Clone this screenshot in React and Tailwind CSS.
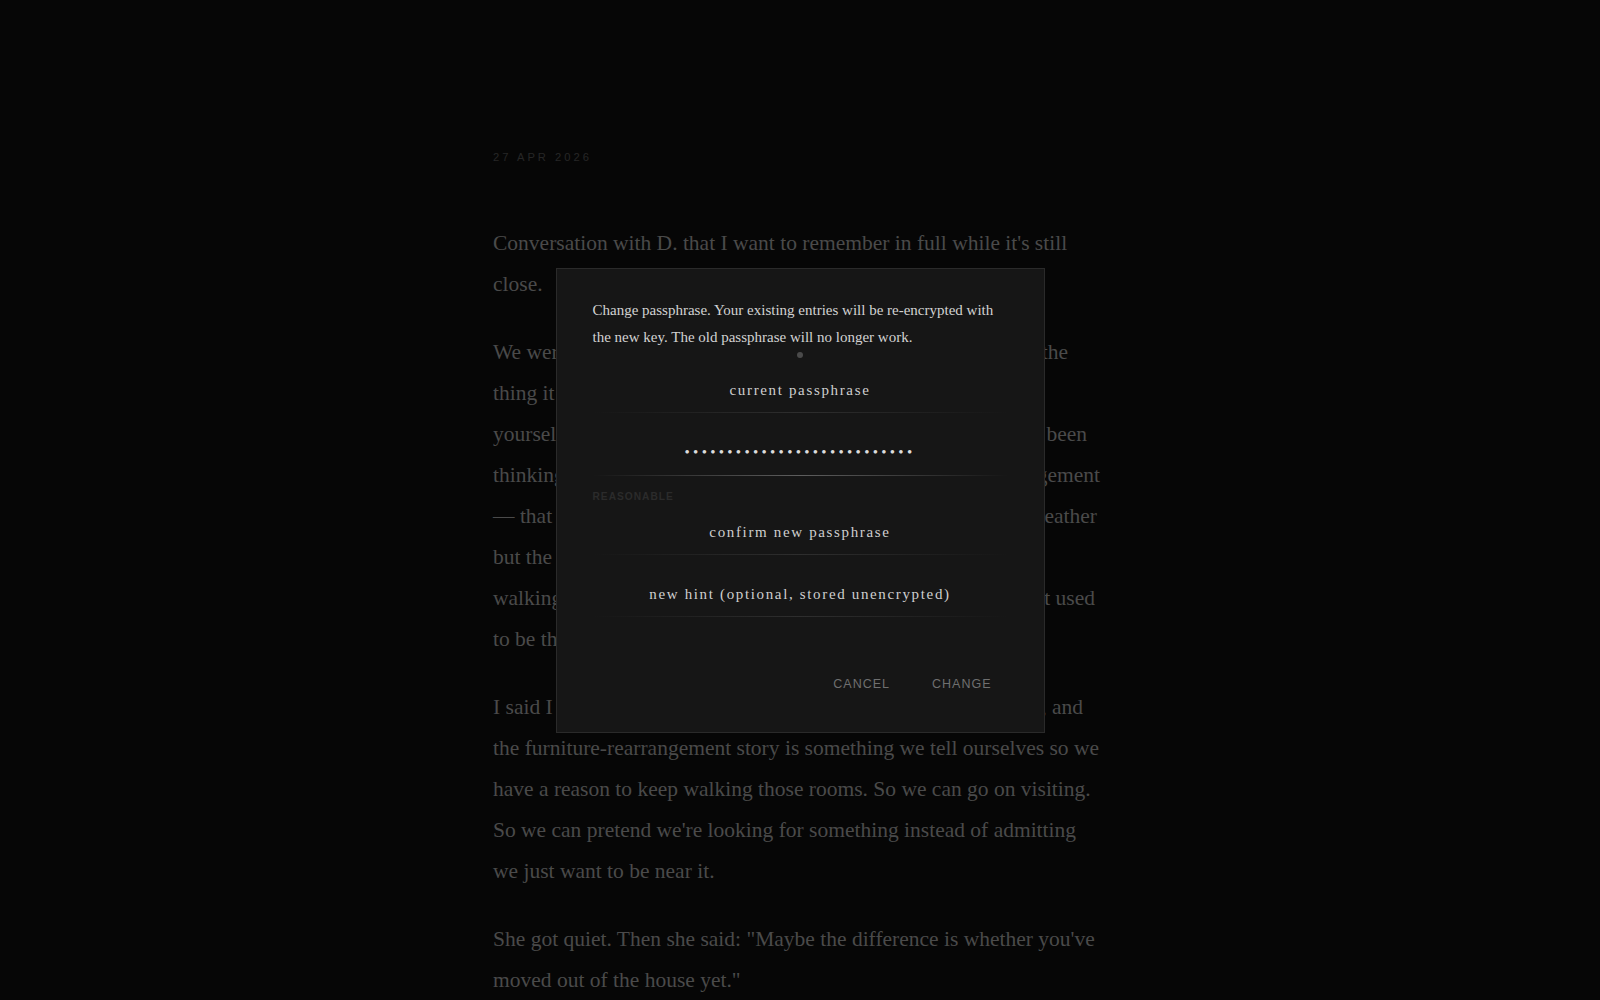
import React from "react";

const serif = { fontFamily: '"Liberation Serif", "Times New Roman", serif' };
const sans = { fontFamily: '"Liberation Sans", Arial, sans-serif' };

function Line({ left, right, end }) {
  return (
    <div
      className="flex justify-between whitespace-nowrap"
      style={{ width: end ? end - 493 : 560 }}
    >
      <span>{left}</span>
      {right ? <span>{right}</span> : null}
    </div>
  );
}

function Field({ placeholder, value, focused, className = "" }) {
  return (
    <div className={className}>
      <input
        readOnly
        type="text"
        placeholder={placeholder}
        value={value || ""}
        className={
          "block w-full h-[44px] bg-transparent text-center outline-none text-[15px] text-[#dcdcdc] placeholder:text-[#cfcfcf] " +
          (value ? "tracking-[3.3px]" : "tracking-[1.65px]")
        }
        style={serif}
      />
      <div
        className={
          "h-px w-full bg-gradient-to-r from-transparent to-transparent " +
          (focused ? "via-[#5e5e5e]" : "via-[#2e2e2e]")
        }
      />
    </div>
  );
}

export default function App() {
  return (
    <div className="min-h-[1000px] w-full bg-[#060606] overflow-hidden relative">
      <div className="flex justify-center">
        <div className="w-[614px] pt-[149px] pb-[80px]">
          <div
            className="text-[11.2px] leading-[16px] tracking-[3px] text-[#262626]"
            style={sans}
          >
            27 APR 2026
          </div>
          <div
            className="mt-[58px] text-[21.5px] leading-[41.1px] text-[#4a4a4a]"
            style={serif}
          >
            <div className="mb-[26.5px]">
              <div className="whitespace-nowrap">
                Conversation with D. that I want to remember in full while it's still
              </div>
              <div>close.</div>
            </div>
            <div className="mb-[26.5px]">
              <Line left="We were" right="the" end={1068} />
              <Line left="thing it" />
              <Line left="yourself" right="been" end={1087} />
              <Line left="thinking" right="arrangement" end={1100} />
              <Line left="— that" right="weather" end={1097} />
              <Line left="but the" />
              <Line left="walking" right="it used" end={1095} />
              <Line left="to be the" />
            </div>
            <div className="mb-[26.5px]">
              <Line left="I said I" right="it, and" end={1083} />
              <div className="whitespace-nowrap">
                the furniture-rearrangement story is something we tell ourselves so we
              </div>
              <div className="whitespace-nowrap">
                have a reason to keep walking those rooms. So we can go on visiting.
              </div>
              <div className="whitespace-nowrap">
                So we can pretend we're looking for something instead of admitting
              </div>
              <div className="whitespace-nowrap">we just want to be near it.</div>
            </div>
            <div>
              <div className="whitespace-nowrap">
                She got quiet. Then she said: "Maybe the difference is whether you've
              </div>
              <div>moved out of the house yet."</div>
            </div>
          </div>
        </div>
      </div>

      <div className="fixed inset-0 flex items-center justify-center">
        <div className="w-[489px] h-[465px] bg-[#161616] border border-[#2a2a2a] pt-[28.7px] px-[36px] pb-[31px]">
          <p
            className="text-[15px] leading-[26.5px] text-[#d2d2d2] whitespace-nowrap"
            style={serif}
          >
            Change passphrase. Your existing entries will be re-encrypted with
            <br />
            the new key. The old passphrase will no longer work.
          </p>
          <div className="mx-auto mt-[2px] h-[6px] w-[6px] rounded-full bg-[#4a4a4a]" />
          <Field className="mt-[10.3px]" placeholder="current passphrase" />
          <Field className="mt-[17.2px]" value={"•".repeat(27)} focused />
          <div
            className="mt-[15.5px] h-[12px] leading-[12px] text-[10.2px] font-bold tracking-[1px] text-[#2b2b2b]"
            style={sans}
          >
            REASONABLE
          </div>
          <Field className="mt-[7px]" placeholder="confirm new passphrase" />
          <Field
            className="mt-[17.3px]"
            placeholder="new hint (optional, stored unencrypted)"
          />
          <div className="mt-[51px] flex justify-end gap-[10px]">
            <button
              className="h-[32.6px] px-4 text-[12.5px] tracking-[1px] text-[#6f6f6f] uppercase"
              style={sans}
            >
              Cancel
            </button>
            <button
              className="h-[32.6px] px-4 text-[12.5px] tracking-[1px] text-[#6f6f6f] uppercase"
              style={sans}
            >
              Change
            </button>
          </div>
        </div>
      </div>
    </div>
  );
}
